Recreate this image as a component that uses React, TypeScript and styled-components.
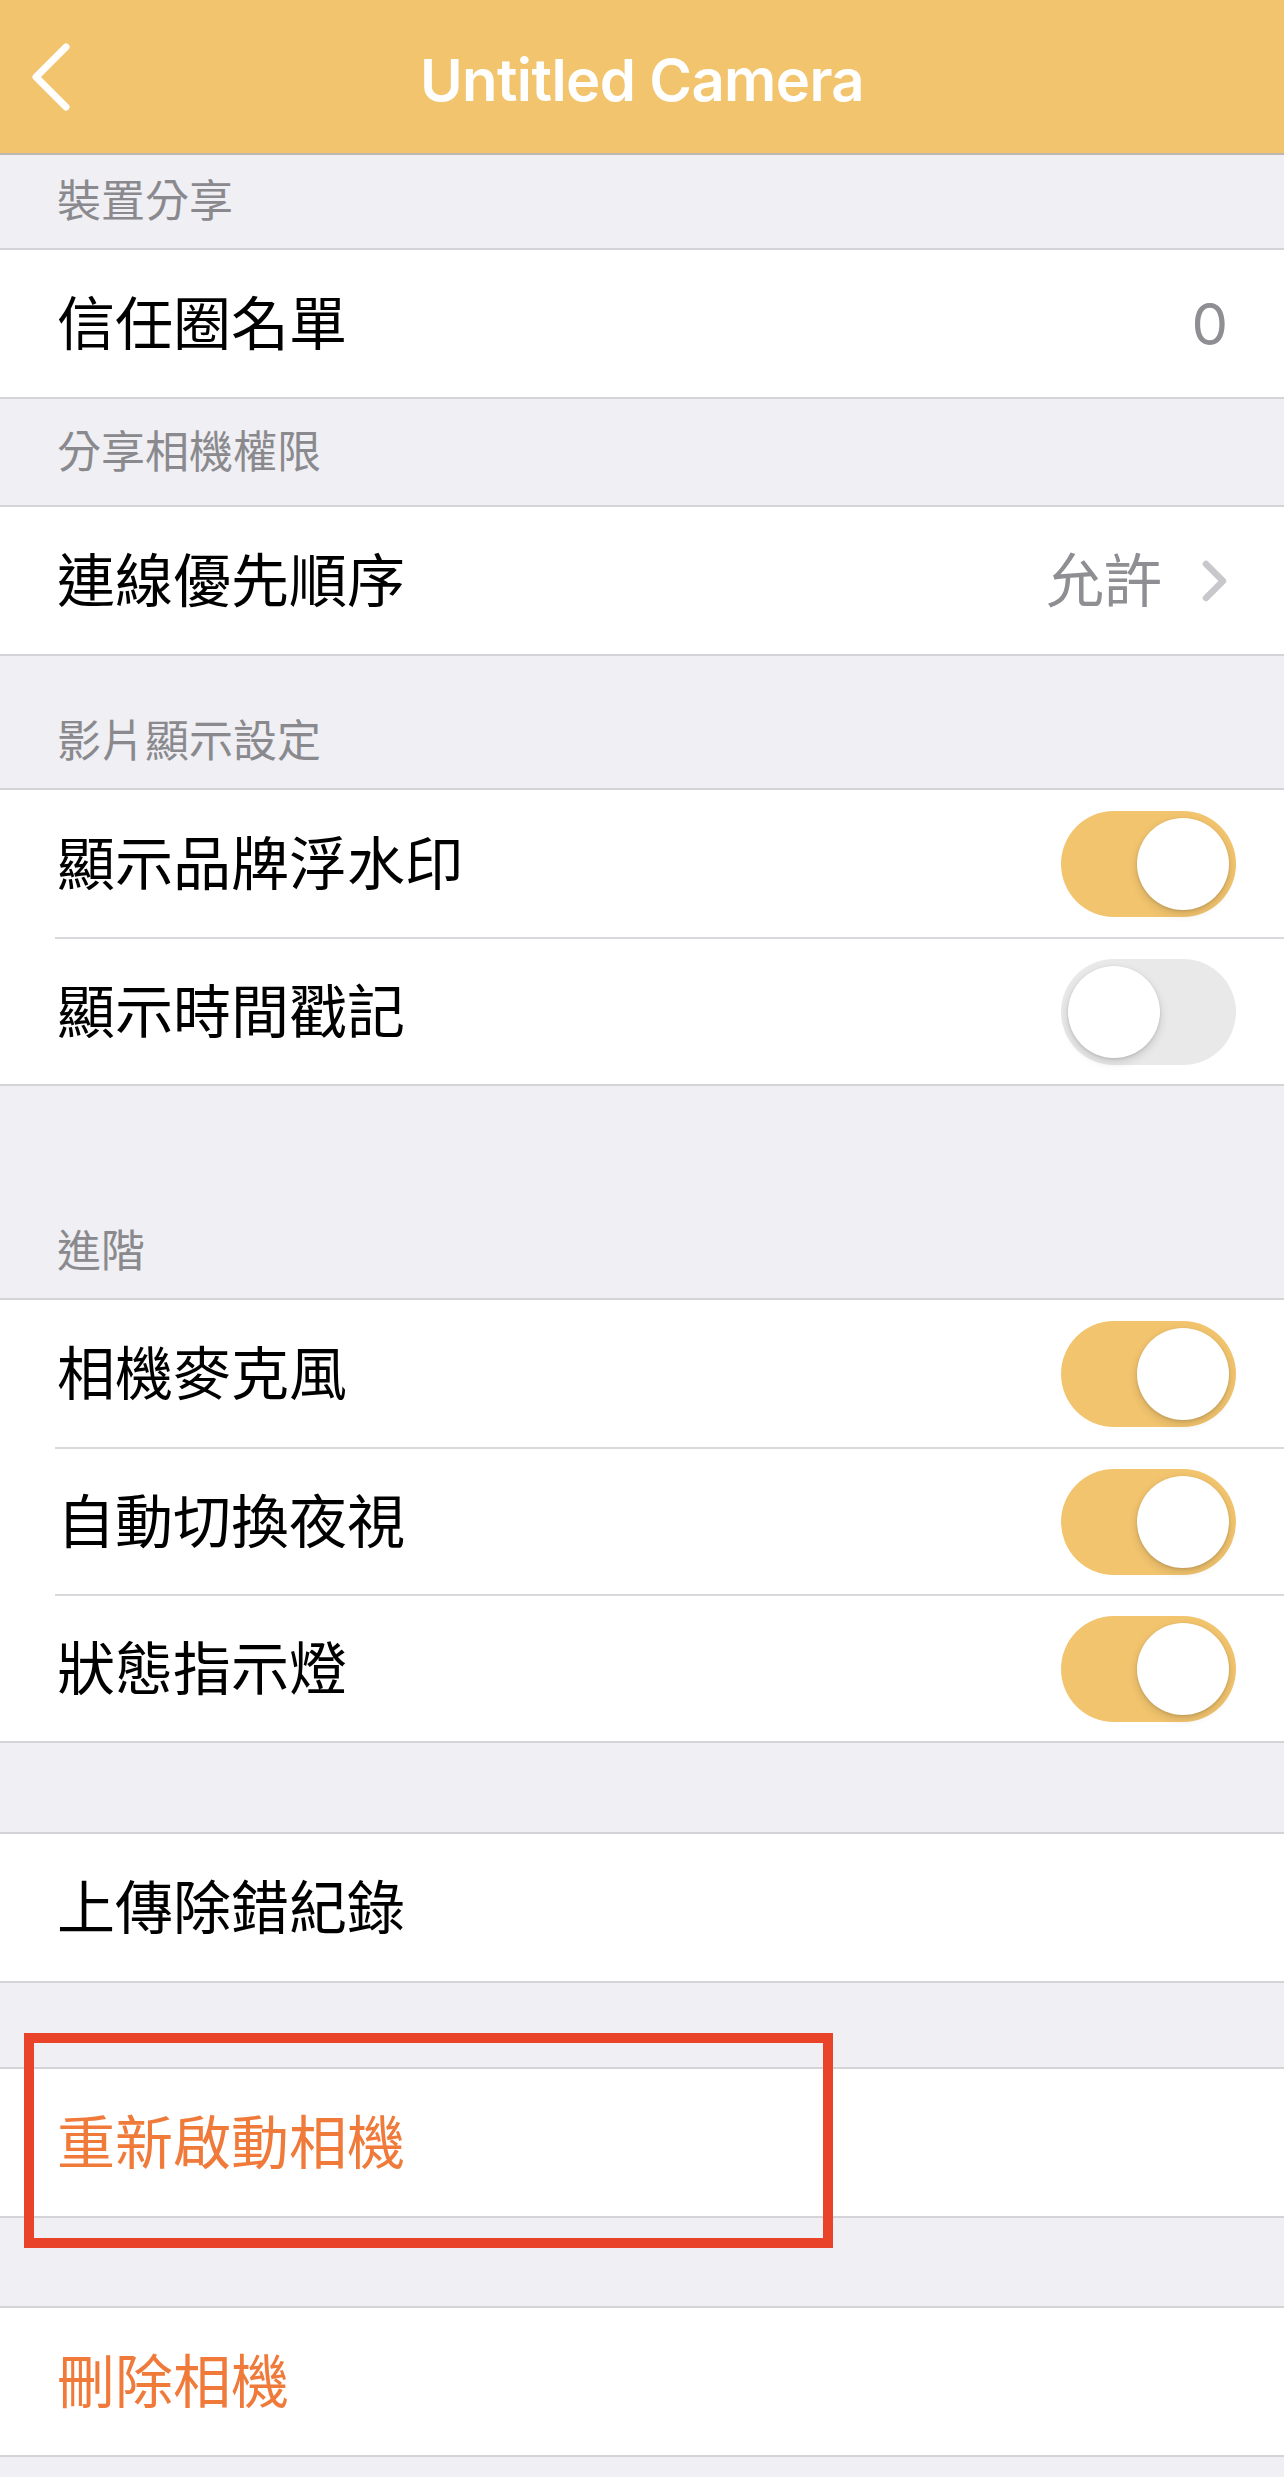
import styled, { createGlobalStyle } from "styled-components"

const GlobalStyle = createGlobalStyle`
  html, body {
    margin: 0;
    padding: 0;
    background: #efeff4;
  }
  body {
    font-family: "Inter", "Noto Sans CJK TC", "Noto Sans", sans-serif;
    -webkit-font-smoothing: antialiased;
  }
`

const Page = styled.div`
  width: 1284px;
  min-height: 2477px;
  background: #efeff4;
  display: flex;
  flex-direction: column;
`

const NavBar = styled.header`
  height: 153px;
  background: #f2c46e;
  border-bottom: 2px solid #bcb8b0;
  display: grid;
  grid-template-columns: 200px 1fr 200px;
  align-items: center;
`

const BackButton = styled.button`
  background: none;
  border: 0;
  padding: 0 0 0 28px;
  height: 100%;
  display: flex;
  align-items: center;
  cursor: pointer;
`

const Title = styled.h1`
  margin: 0;
  text-align: center;
  color: #fff;
  font-size: 58px;
  font-weight: 600;
  letter-spacing: -0.6px;
  padding-top: 6px;
`

const SectionHeader = styled.div<{ $height: number; $pad: number }>`
  height: ${(p) => p.$height}px;
  box-sizing: border-box;
  display: flex;
  align-items: flex-end;
  padding: 0 0 ${(p) => p.$pad}px 57px;
  color: #8a8a8e;
  font-size: 44px;
  line-height: 1;
`

const Gap = styled.div<{ $height: number }>`
  height: ${(p) => p.$height}px;
`

const Group = styled.section`
  position: relative;
  background: #fff;
  border-top: 2px solid #d4d4d8;
  border-bottom: 2px solid #d4d4d8;
`

const RowInner = styled.div`
  height: 147px;
  box-sizing: border-box;
  display: flex;
  align-items: center;
  justify-content: space-between;
  padding: 0 48px 0 2px;
`

const Row = styled.div`
  padding-left: 55px;
  & + & > ${RowInner} {
    border-top: 2px solid #d9d9dd;
  }
`

const Label = styled.span<{ $danger?: boolean }>`
  font-size: 58px;
  line-height: 1;
  color: ${(p) => (p.$danger ? "#ef7a3a" : "#000")};
`

const Detail = styled.span`
  display: flex;
  align-items: center;
  gap: 40px;
  padding-right: 8px;
  font-size: 58px;
  line-height: 1;
  color: #8e8e93;
`

const Track = styled.div<{ $on: boolean }>`
  width: 175px;
  height: 106px;
  border-radius: 53px;
  box-sizing: border-box;
  padding: 7px;
  display: flex;
  justify-content: ${(p) => (p.$on ? "flex-end" : "flex-start")};
  align-items: center;
  background: ${(p) => (p.$on ? "#f2c46e" : "#e9e9ea")};
`

const Knob = styled.div`
  width: 92px;
  height: 92px;
  border-radius: 50%;
  background: #fff;
  box-shadow: 0 4px 10px rgba(0, 0, 0, 0.14), 0 1px 3px rgba(0, 0, 0, 0.12);
`

const Highlight = styled.span`
  position: absolute;
  display: block;
  left: 24px;
  top: -36px;
  width: 809px;
  height: 215px;
  box-sizing: border-box;
  border: 10px solid #e9432a;
  pointer-events: none;
`

const Chevron = () => (
  <svg width="26" height="42" viewBox="0 0 26 42">
    <path
      d="M4 4 L21 21 L4 38"
      fill="none"
      stroke="#c7c7cc"
      strokeWidth="6.5"
      strokeLinecap="round"
      strokeLinejoin="round"
    />
  </svg>
)

const BackArrow = () => (
  <svg width="46" height="72" viewBox="0 0 46 72">
    <path
      d="M38 6 L8 36 L38 66"
      fill="none"
      stroke="#fff"
      strokeWidth="7"
      strokeLinecap="round"
      strokeLinejoin="round"
    />
  </svg>
)

const Switch = ({ on }: { on: boolean }) => (
  <Track $on={on}>
    <Knob />
  </Track>
)

export default function App() {
  return (
    <Page>
      <GlobalStyle />
      <NavBar>
        <BackButton aria-label="back">
          <BackArrow />
        </BackButton>
        <Title>Untitled Camera</Title>
        <div />
      </NavBar>

      <SectionHeader $height={93} $pad={25}>裝置分享</SectionHeader>
      <Group>
        <Row>
          <RowInner>
            <Label>信任圈名單</Label>
            <Detail>0</Detail>
          </RowInner>
        </Row>
      </Group>

      <SectionHeader $height={106} $pad={31}>分享相機權限</SectionHeader>
      <Group>
        <Row>
          <RowInner>
            <Label>連線優先順序</Label>
            <Detail>
              允許
              <Chevron />
            </Detail>
          </RowInner>
        </Row>
      </Group>

      <SectionHeader $height={132} $pad={25}>影片顯示設定</SectionHeader>
      <Group>
        <Row>
          <RowInner>
            <Label>顯示品牌浮水印</Label>
            <Switch on />
          </RowInner>
        </Row>
        <Row>
          <RowInner>
            <Label>顯示時間戳記</Label>
            <Switch on={false} />
          </RowInner>
        </Row>
      </Group>

      <SectionHeader $height={212} $pad={25}>進階</SectionHeader>
      <Group>
        <Row>
          <RowInner>
            <Label>相機麥克風</Label>
            <Switch on />
          </RowInner>
        </Row>
        <Row>
          <RowInner>
            <Label>自動切換夜視</Label>
            <Switch on />
          </RowInner>
        </Row>
        <Row>
          <RowInner>
            <Label>狀態指示燈</Label>
            <Switch on />
          </RowInner>
        </Row>
      </Group>

      <Gap $height={89} />
      <Group>
        <Row>
          <RowInner>
            <Label>上傳除錯紀錄</Label>
          </RowInner>
        </Row>
      </Group>

      <Gap $height={84} />
      <Group>
        <Row>
          <RowInner>
            <Label $danger>重新啟動相機</Label>
          </RowInner>
        </Row>
        <Highlight />
      </Group>

      <Gap $height={88} />
      <Group>
        <Row>
          <RowInner>
            <Label $danger>刪除相機</Label>
          </RowInner>
        </Row>
      </Group>
    </Page>
  )
}
